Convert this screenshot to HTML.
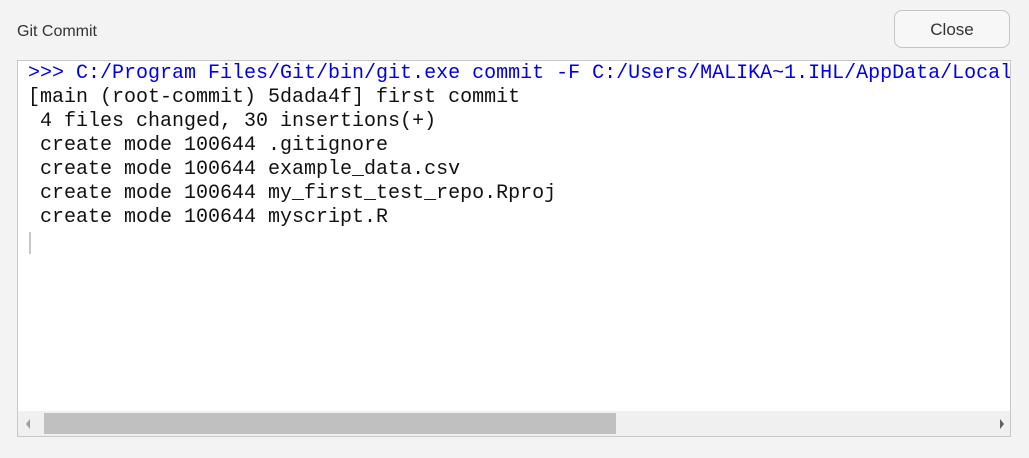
<!DOCTYPE html>
<html><head><style>
body{margin:0;width:1029px;height:458px;background:#f2f3f2;font-family:"Liberation Sans",sans-serif;position:relative;overflow:hidden}
.title{position:absolute;left:17px;top:23px;font-size:16px;color:#333}
.btn{position:absolute;left:894px;top:10px;width:116px;height:38px;border:1px solid #c4c4c4;border-radius:8px;background:#f7f7f7;box-sizing:border-box;font-size:17px;color:#333;text-align:center;line-height:38px}
.panel{position:absolute;left:17px;top:60px;width:994px;height:377px;background:#fff;border:1px solid #c8c8c8;box-sizing:border-box;overflow:hidden}
pre{margin:0;position:absolute;left:10px;top:1px;font-family:"Liberation Mono",monospace;font-size:20px;line-height:24px;color:#111;white-space:pre}
.b{color:#0000ee}
.cur{position:absolute;left:11px;top:171px;width:2px;height:22px;background:#c8c8c8}
.sb{position:absolute;left:0;bottom:0;width:100%;height:25px;background:#f0f0f0}
.th{position:absolute;left:26px;top:2px;width:572px;height:21px;background:#c0c0c0}
.al{position:absolute;left:8px;top:8px;width:0;height:0;border-top:5px solid transparent;border-bottom:5px solid transparent;border-right:4px solid #a0a0a0}
.ar{position:absolute;right:6px;top:8px;width:0;height:0;border-top:5px solid transparent;border-bottom:5px solid transparent;border-left:4px solid #606060}
</style></head><body>
<div class="title">Git Commit</div>
<div class="btn">Close</div>
<div class="panel">
<pre><span class="b">&gt;&gt;&gt; C:/Program Files/Git/bin/git.exe commit -F C:/Users/MALIKA~1.IHL/AppData/Local/Temp</span>
[main (root-commit) 5dada4f] first commit
 4 files changed, 30 insertions(+)
 create mode 100644 .gitignore
 create mode 100644 example_data.csv
 create mode 100644 my_first_test_repo.Rproj
 create mode 100644 myscript.R</pre>
<div class="cur"></div>
<div class="sb"><div class="al"></div><div class="th"></div><div class="ar"></div></div>
</div>
</body></html>
